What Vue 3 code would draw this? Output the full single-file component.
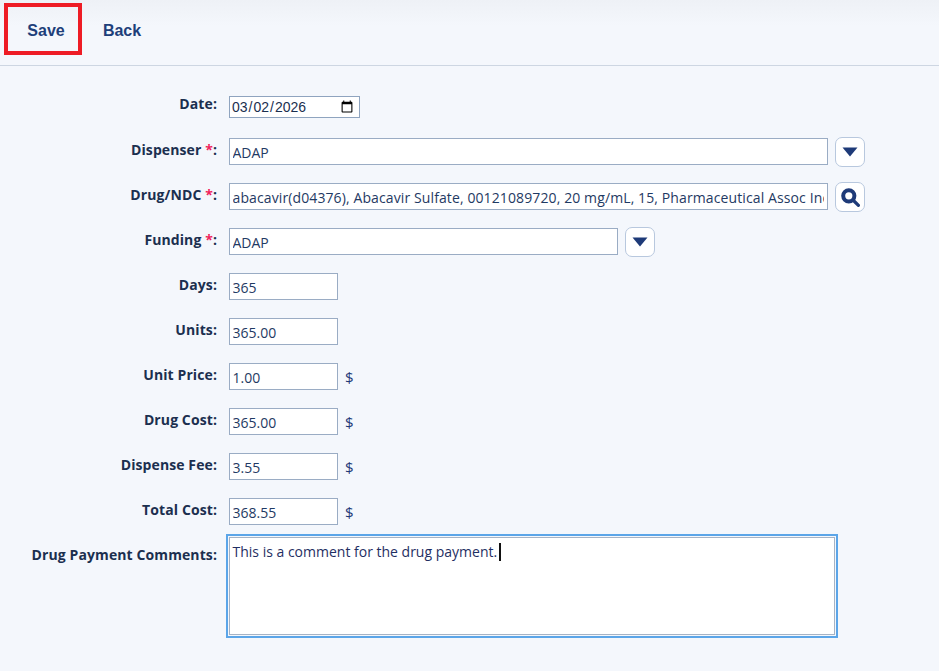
<template>
  <div class="page">
    <div class="toolbar">
      <button class="tool-btn save">Save</button>
      <button class="tool-btn back">Back</button>
    </div>
    <form class="form" @submit.prevent>
      <div class="row date-row">
        <label class="lbl">Date:</label>
        <input class="date" type="date" value="2026-03-02" />
      </div>
      <div class="row">
        <label class="lbl">Dispenser <span class="req">*</span>:</label>
        <input class="txt wide" type="text" value="ADAP" />
        <button class="icon-btn" type="button">
          <svg width="16" height="10" viewBox="0 0 16 10"><path d="M0.5 0.5h15L8 9.5z" fill="#1e3a78" /></svg>
        </button>
      </div>
      <div class="row">
        <label class="lbl">Drug/NDC <span class="req">*</span>:</label>
        <input class="txt wide drug" type="text" :value="drug" />
        <button class="icon-btn" type="button">
          <svg width="19" height="19" viewBox="0 0 19 19">
            <circle cx="7.8" cy="7.8" r="5.6" fill="none" stroke="#1e3a78" stroke-width="4" />
            <path d="M12.5 12.5L17.4 17.4" stroke="#1e3a78" stroke-width="3.2" stroke-linecap="round" />
          </svg>
        </button>
      </div>
      <div class="row">
        <label class="lbl">Funding <span class="req">*</span>:</label>
        <input class="txt funding" type="text" value="ADAP" />
        <button class="icon-btn" type="button">
          <svg width="16" height="10" viewBox="0 0 16 10"><path d="M0.5 0.5h15L8 9.5z" fill="#1e3a78" /></svg>
        </button>
      </div>
      <div class="row" v-for="f in fields" :key="f.label">
        <label class="lbl">{{ f.label }}:</label>
        <input class="txt small" type="text" :value="f.value" />
        <span v-if="f.money" class="unit">$</span>
      </div>
      <div class="row comment-row">
        <label class="lbl">Drug Payment Comments:</label>
        <div class="comment-wrap">
          <textarea class="comment" :value="comment"></textarea>
          <span class="caret"></span>
        </div>
      </div>
    </form>
  </div>
</template>

<script setup>
const drug = 'abacavir(d04376), Abacavir Sulfate, 00121089720, 20 mg/mL, 15, Pharmaceutical Assoc Inc'
const comment = 'This is a comment for the drug payment.'

const fields = [
  { label: 'Days', value: '365' },
  { label: 'Units', value: '365.00' },
  { label: 'Unit Price', value: '1.00', money: true },
  { label: 'Drug Cost', value: '365.00', money: true },
  { label: 'Dispense Fee', value: '3.55', money: true },
  { label: 'Total Cost', value: '368.55', money: true }
]
</script>

<style>
html,
body {
  margin: 0;
  background: #f4f7fc;
}
</style>

<style scoped>
.page {
  width: 939px;
  height: 671px;
  overflow: hidden;
  background: #f4f7fc;
  font-family: "Open Sans", "Noto Sans", sans-serif;
  color: #1b2f4f;
}
.toolbar {
  height: 66px;
  box-sizing: border-box;
  padding: 3px 0 0 4px;
  display: flex;
  align-items: flex-start;
  gap: 1px;
  background: linear-gradient(#eef1f6, #f4f7fc 40%);
  border-bottom: 1px solid #cdd6e2;
}
.tool-btn {
  height: 52px;
  border: 4px solid transparent;
  background: none;
  font: bold 16px "Liberation Sans", Arial, sans-serif;
  color: #1e3f7a;
  padding: 3px 0 0 0;
}
.save {
  width: 78px;
  padding-left: 6px;
  border-color: #ee1c25;
}
.back {
  width: 78px;
}
.form {
  padding-top: 30px;
  display: flex;
  flex-direction: column;
  gap: 18px;
}
.row {
  display: flex;
  align-items: flex-start;
}
.date-row {
  height: 24px;
}
.lbl {
  width: 217px;
  margin-right: 12px;
  flex: none;
  text-align: right;
  font-size: 14px;
  font-weight: 700;
  letter-spacing: 0.1px;
  line-height: 19px;
  padding-top: 2px;
}
.req {
  color: #f0245c;
}
.date-row .lbl {
  padding-top: 0;
  margin-top: -2px;
}
.date {
  width: 131px;
  height: 22px;
  box-sizing: border-box;
  border: 1px solid #8fa4bf;
  border-radius: 0;
  background: #fff;
  padding: 0 3px 0 1px;
  font: 14px "Liberation Sans", Arial, sans-serif;
  color: #1b2f4f;
}
.txt {
  height: 27px;
  box-sizing: border-box;
  border: 1px solid #9aacc4;
  border-radius: 0;
  background: #fff;
  padding: 1px 3px 0 2.5px;
  font: 14px "Open Sans", "Noto Sans", sans-serif;
  color: #1f3a63;
  outline: none;
}
.wide {
  width: 599px;
}
.drug {
  letter-spacing: 0.11px;
}
.funding {
  width: 389px;
}
.small {
  width: 109px;
}
.icon-btn {
  width: 30px;
  height: 30px;
  margin: -1px 0 -2px 7px;
  padding: 0;
  display: flex;
  align-items: center;
  justify-content: center;
  background: #fff;
  border: 1px solid #b8c8de;
  border-radius: 7px;
}
.unit {
  margin-left: 7px;
  height: 27px;
  font-size: 15px;
  line-height: 29px;
  color: #1e3a78;
}
.comment-row {
  margin-top: -6px;
}
.comment-row .lbl {
  padding-top: 8px;
}
.comment-wrap {
  position: relative;
  height: 98px;
}
.comment {
  display: block;
  width: 606px;
  height: 98px;
  box-sizing: border-box;
  resize: none;
  border: 1px solid #a6b3c4;
  outline: 2px solid #5ba5e8;
  outline-offset: 1px;
  background: #fff;
  padding: 4px 2.5px;
  font: 14px "Open Sans", "Noto Sans", sans-serif;
  color: #1f2f63;
}
.caret {
  position: absolute;
  left: 270px;
  top: 6px;
  width: 2px;
  height: 18px;
  background: #111;
}
</style>
